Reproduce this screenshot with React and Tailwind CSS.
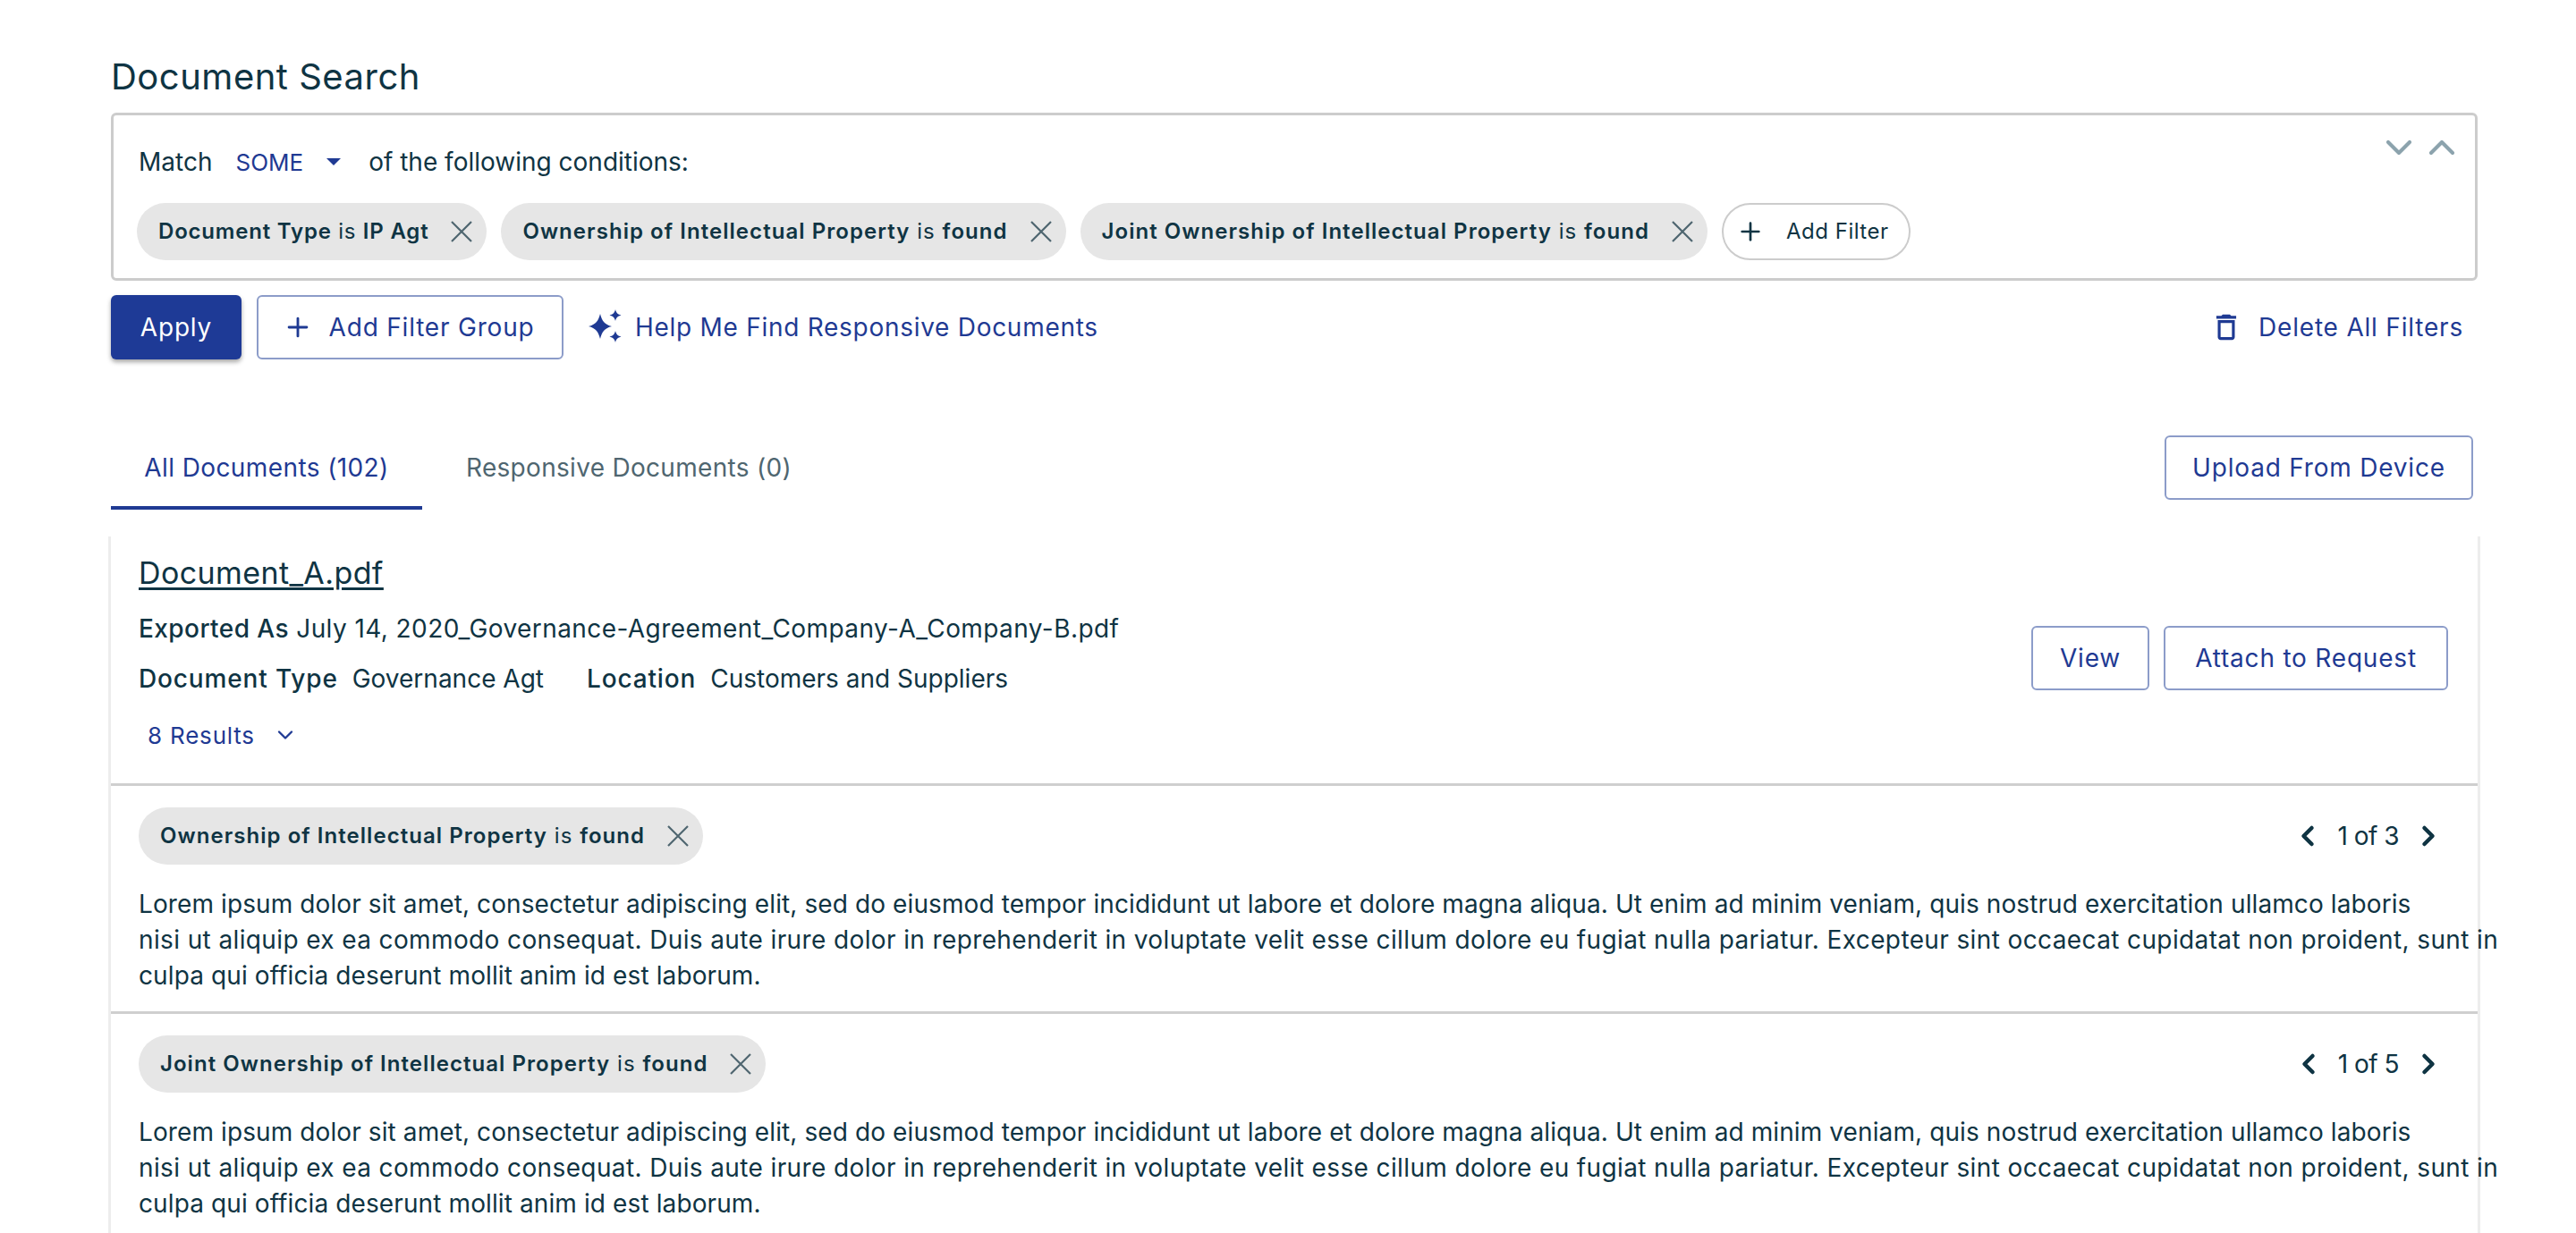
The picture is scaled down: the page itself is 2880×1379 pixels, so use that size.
import React from 'react';
import { ChevronDown, ChevronUp, ChevronLeft, ChevronRight, Plus } from 'lucide-react';

// The three lines wrap the same way in both result rows
const loremLines = [
    { text: "Lorem ipsum dolor sit amet, consectetur adipiscing elit, sed do eiusmod tempor incididunt ut labore et dolore magna aliqua. Ut enim ad minim veniam, quis nostrud exercitation ullamco laboris", spacing: 'tracking-[0.1px]' },
    { text: "nisi ut aliquip ex ea commodo consequat. Duis aute irure dolor in reprehenderit in voluptate velit esse cillum dolore eu fugiat nulla pariatur. Excepteur sint occaecat cupidatat non proident, sunt in", spacing: 'tracking-[0.38px]' },
    { text: "culpa qui officia deserunt mollit anim id est laborum.", spacing: 'tracking-[0.11px]' },
];

// --- Filter chip ---
function Chip({ name, value, spacing = 'tracking-[1.05px]' }) {
    return (
        <div className="flex h-[64px] items-center gap-[25px] rounded-[32px] bg-[#e6e6e6] pl-[24px] pr-[16px] text-[24px] leading-none text-[#0f3443]">
            <span className={`whitespace-nowrap ${spacing}`}>
                <b className="font-semibold">{name}</b> is <b className="font-semibold">{value}</b>
            </span>
            <svg viewBox="0 0 24 24" className="h-[24px] w-[24px] fill-none stroke-[#4f6670] stroke-[2.2]">
                <path d="M1 1L23 23M23 1L1 23" />
            </svg>
        </div>
    );
}

function OutlineButton({ children, className = '' }) {
    return (
        <button className={`flex h-[72px] items-center justify-center rounded-[6px] border-2 border-[#8c9cc9] bg-white text-[28px] tracking-[0.8px] text-[#1f3a93] ${className}`}>
            {children}
        </button>
    );
}

function Sparkles() {
    return (
        <svg viewBox="0 0 40 44" className="h-[44px] w-[40px] fill-[#1f3a93]">
            <path d="M15 7 C17 15 20 19 28 21 C20 23 17 27 15 35 C13 27 10 23 2 21 C10 19 13 15 15 7 Z" />
            <path d="M32 2 C33 6 34.5 7.5 38.5 8.5 C34.5 9.5 33 11 32 15 C31 11 29.5 9.5 25.5 8.5 C29.5 7.5 31 6 32 2 Z" />
            <path d="M32 26 C33 30 34.5 31.5 38.5 32.5 C34.5 33.5 33 35 32 39 C31 35 29.5 33.5 25.5 32.5 C29.5 31.5 31 30 32 26 Z" />
        </svg>
    );
}

function Trash() {
    return (
        <svg viewBox="0 0 24 24" className="h-[38px] w-[38px] fill-[#1f3a93]">
            <path d="M6 19c0 1.1.9 2 2 2h8c1.1 0 2-.9 2-2V7H6v12zM8 9h8v10H8V9zm7.5-5l-1-1h-5l-1 1H5v2h14V4h-3.5z" />
        </svg>
    );
}

// --- One matched condition under the document ---
function ResultRow({ name, count }) {
    return (
        <div className="border-t-[3px] border-[#cfcfcf] px-[31px] pt-[24px]">
            <div className="flex items-center justify-between">
                <Chip name={name} value="found" />
                <div className="mr-[6px] flex items-center gap-[15px] text-[28px] tracking-[-0.5px] text-[#0f3443]">
                    <ChevronLeft className="h-[36px] w-[36px]" strokeWidth={3} />
                    <span>{count}</span>
                    <ChevronRight className="h-[36px] w-[36px]" strokeWidth={3} />
                </div>
            </div>
            <p className="mt-[24px] pb-[20px] text-[28px] leading-[40px] text-[#0f3443]">
                {loremLines.map((line) => (
                    <span key={line.text} className={`block whitespace-nowrap ${line.spacing}`}>{line.text}</span>
                ))}
            </p>
        </div>
    );
}

export default function App() {
    return (
        <main className="min-h-screen overflow-hidden bg-white pl-[124px] pr-[110px] pt-[60px] font-['Inter',sans-serif] text-[#0f3443]">
            <h1 className="text-[40px] leading-[52px] tracking-[0.5px]">Document Search</h1>

            {/* --- Filter box --- */}
            <section className="relative mt-[14px] h-[188px] rounded-[6px] border-[3px] border-[#cccccc] px-[26px] pt-[28px]">
                <div className="ml-[2px] flex h-[48px] items-center text-[28px]">
                    <span>Match</span>
                    <span className="ml-[26px] text-[26px] text-[#1f3a93]">SOME</span>
                    <span className="ml-[26px] h-0 w-0 border-x-[8px] border-t-[8px] border-x-transparent border-t-[#1f3a93]" />
                    <span className="ml-[31px]">of the following conditions:</span>
                </div>
                <div className="absolute right-[13px] top-[12px] flex text-[#8ca3ad]">
                    <ChevronDown className="h-[48px] w-[48px]" strokeWidth={2.1} />
                    <ChevronUp className="h-[48px] w-[48px]" strokeWidth={2.1} />
                </div>
                <div className="mt-[22px] flex gap-[16px]">
                    <Chip name="Document Type" value="IP Agt" spacing="tracking-[0.8px]" />
                    <Chip name="Ownership of Intellectual Property" value="found" />
                    <Chip name="Joint Ownership of Intellectual Property" value="found" />
                    <div className="flex h-[64px] items-center gap-[24px] rounded-[32px] border-2 border-[#cccccc] pl-[14px] pr-[22px] text-[24px] tracking-[0.5px]">
                        <Plus className="h-[32px] w-[32px]" strokeWidth={2} />
                        <span>Add Filter</span>
                    </div>
                </div>
            </section>

            {/* --- Action row --- */}
            <div className="mt-[16px] flex items-center">
                <button className="h-[72px] w-[146px] rounded-[6px] bg-[#1e3a96] text-[28px] tracking-[0.8px] text-white shadow-[0_3px_5px_rgba(0,0,0,0.35)]">Apply</button>
                <OutlineButton className="ml-[17px] w-[343px] gap-[18px] pr-[4px]">
                    <Plus className="h-[34px] w-[34px]" strokeWidth={2} />
                    Add Filter Group
                </OutlineButton>
                <div className="ml-[26px] flex items-center gap-[14px] text-[28px] tracking-[0.72px] text-[#1f3a93]">
                    <Sparkles />
                    <span>Help Me Find Responsive Documents</span>
                </div>
                <div className="ml-auto mr-[16px] flex items-center gap-[17px] text-[28px] tracking-[0.8px] text-[#1f3a93]">
                    <Trash />
                    <span>Delete All Filters</span>
                </div>
            </div>

            {/* --- Tabs --- */}
            <div className="mt-[85px] flex items-start justify-between">
                <div className="flex">
                    <div className="flex h-[83px] w-[348px] items-center justify-center border-b-4 border-[#1f3a93] pb-[8px] text-[28px] tracking-[0.4px] text-[#1f3a93]">All Documents (102)</div>
                    <div className="flex h-[83px] items-center pb-[12px] pl-[49px] text-[28px] tracking-[0.3px] text-[#4f6670]">Responsive Documents (0)</div>
                </div>
                <OutlineButton className="mr-[5px] h-[70px] w-[345px]">Upload From Device</OutlineButton>
            </div>

            {/* --- Document card --- */}
            <section className="mt-[30px] bg-white shadow-[-3px_0_0_#ededed,3px_0_0_#ededed,0_3px_0_#ededed]">
                <div className="flex h-[276px] items-center justify-between px-[31px] pb-[16px]">
                    <div className="text-[28px]">
                        <div className="text-[34px] leading-[44px] tracking-[0.4px] underline underline-offset-4">Document_A.pdf</div>
                        <div className="mt-[20px] leading-[40px] tracking-[0.42px]"><span className="font-medium">Exported As</span> July 14, 2020_Governance-Agreement_Company-A_Company-B.pdf</div>
                        <div className="mt-[16px] flex leading-[40px]">
                            <span className="font-medium tracking-[0.85px]">Document Type</span>
                            <span className="ml-[16px]">Governance Agt</span>
                            <span className="ml-[48px] font-medium tracking-[0.85px]">Location</span>
                            <span className="ml-[16px]">Customers and Suppliers</span>
                        </div>
                        <div className="ml-[10px] mt-[24px] flex items-center gap-[20px] text-[26px] tracking-[0.8px] text-[#1f3a93]">
                            8 Results
                            <ChevronDown className="h-[28px] w-[28px]" strokeWidth={2} />
                        </div>
                    </div>
                    <div className="mr-[2px] mt-[12px] flex gap-[16px]">
                        <OutlineButton className="w-[132px]">View</OutlineButton>
                        <OutlineButton className="w-[318px]">Attach to Request</OutlineButton>
                    </div>
                </div>
                <ResultRow name="Ownership of Intellectual Property" count="1 of 3" />
                <ResultRow name="Joint Ownership of Intellectual Property" count="1 of 5" />
            </section>
        </main>
    );
}
